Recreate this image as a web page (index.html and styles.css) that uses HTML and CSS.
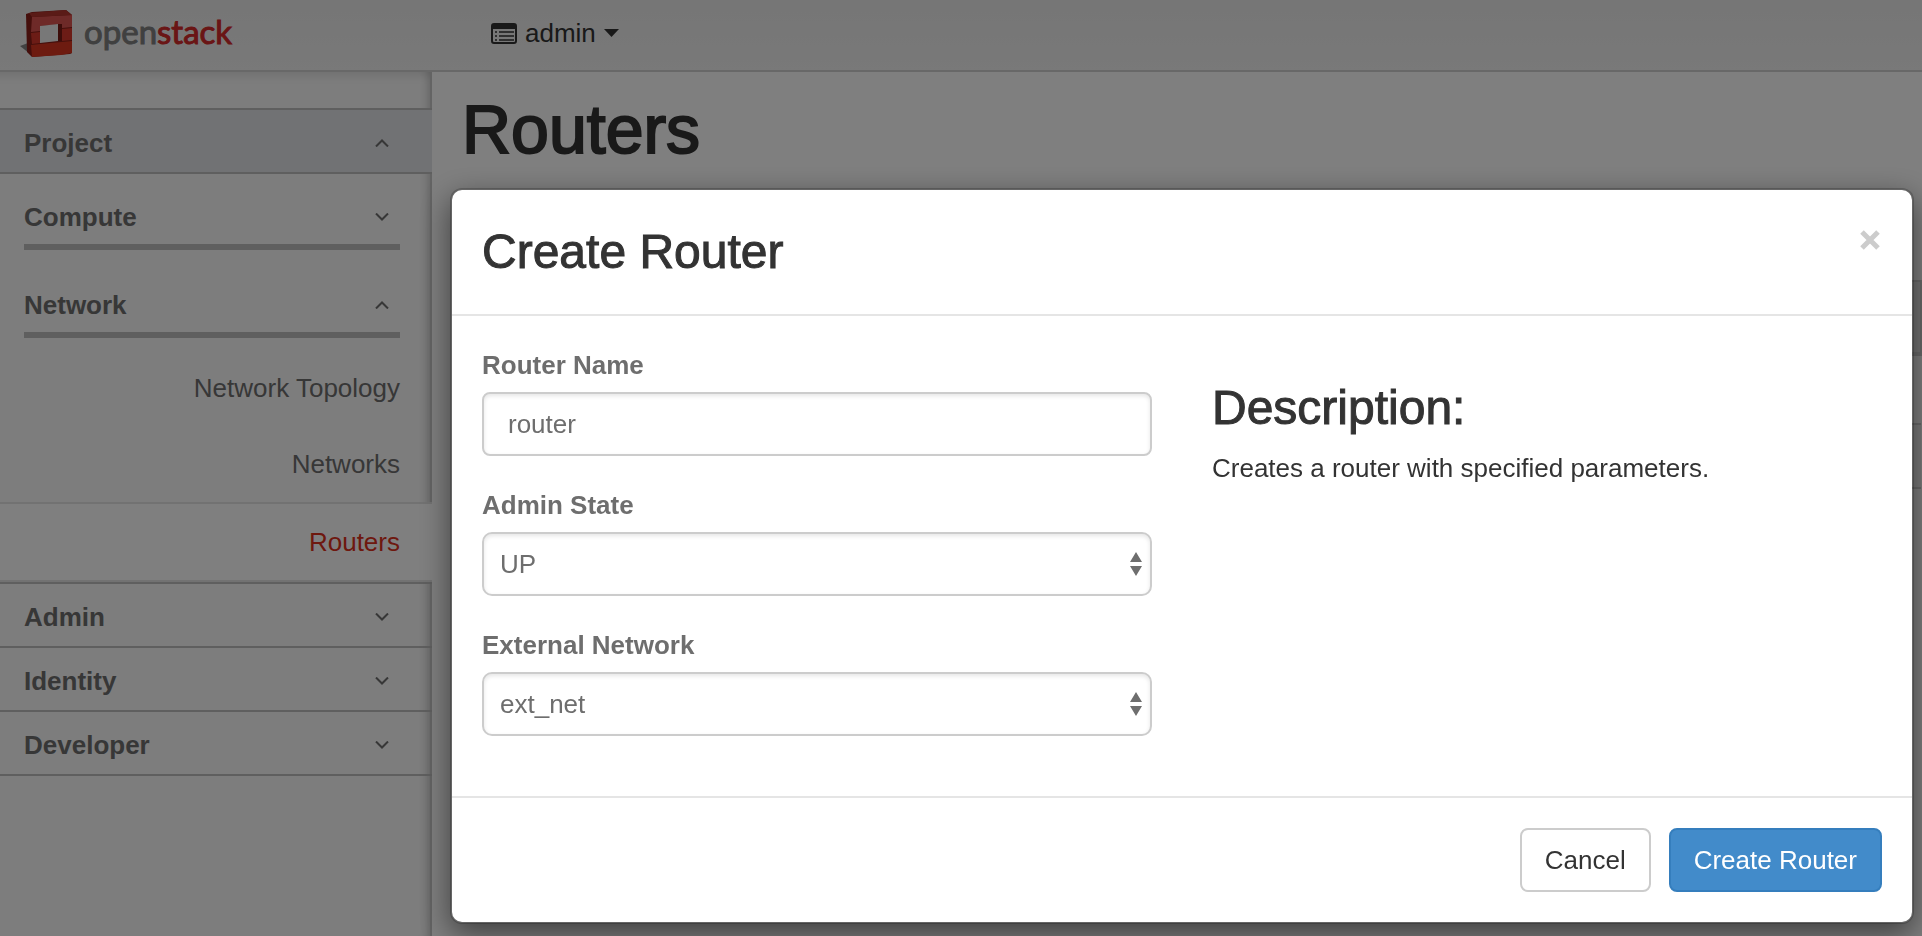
FILE: index.html
```html
<!DOCTYPE html>
<html lang="en">
<head>
    <meta charset="UTF-8">
    <meta name="viewport" content="width=device-width, initial-scale=1.0">
    <title>Routers - OpenStack Dashboard</title>
    <link rel="stylesheet" href="styles.css">
</head>
<body>

    <!-- Top bar -->
    <header class="topbar">
        <a class="brand" href="#">
            <svg class="brand-mark" width="54" height="50" viewBox="0 0 54 50">
                <path d="M0 37 L8 34 L14 48 Z" fill="#858585"/>
                <path d="M6 5 L12 3 L46 1 L52 6 L52 44 L50 45 L12 48 L7 43 Z" fill="#8a1f18"/>
                <path d="M12 8 L52 6 L52 18 L42 19 L42 15 L20 17 L20 22 L11 23 Z" fill="#dc5450"/>
                <path d="M12 8 L9 4 L46 1 L52 6 Z" fill="#b5372f"/>
                <path d="M11 24 L20 23 L20 34 L12 35 Z" fill="#d8392c"/>
                <path d="M42 20 L52 19 L52 31 L42 32 Z" fill="#d8392c"/>
                <path d="M11 36 L20 35 L52 32 L52 44 L41 46 L12 48 Z" fill="#da3620"/>
                <path d="M20 17 L38 15 L38 32 L20 34 Z" fill="#f1f1f1"/>
                <path d="M38 15 L42 15 L42 32 L38 32 Z" fill="#7a1b15"/>
            </svg>
            <span class="brand-text">open<span class="brand-red">stack</span></span>
        </a>
        <button class="project-menu" type="button">
            <svg width="26" height="21" viewBox="0 0 26 21">
                <rect x="1" y="1" width="24" height="19" rx="2" fill="none" stroke="#333" stroke-width="2"/>
                <rect x="1" y="1" width="24" height="5" fill="#333"/>
                <path d="M4 9h2M4 13h2M4 17h2M8 9h15M8 13h15M8 17h15" stroke="#333" stroke-width="1.5"/>
            </svg>
            admin
            <svg class="caret" width="15" height="8" viewBox="0 0 15 8"><path d="M0 0h15L7.500 8z" fill="#333"/></svg>
        </button>
    </header>

    <div class="page">
        <!-- Sidebar -->
        <nav class="sidebar">
            <a class="panel-title open" href="#">Project
                <svg class="chevron" width="14" height="8" viewBox="0 0 14 8"><path d="M1 7.500l6-6 6 6"/></svg>
            </a>
            <div class="panel-body">
                <a class="group-title" href="#">Compute
                    <svg class="chevron" width="14" height="8" viewBox="0 0 14 8"><path d="M1 .5l6 6 6-6"/></svg>
                </a>
                <a class="group-title" href="#">Network
                    <svg class="chevron" width="14" height="8" viewBox="0 0 14 8"><path d="M1 7.500l6-6 6 6"/></svg>
                </a>
                <a class="nav-item" href="#">Network Topology</a>
                <a class="nav-item" href="#">Networks</a>
            </div>
            <a class="nav-item active" href="#">Routers</a>
            <a class="panel-title first" href="#">Admin
                <svg class="chevron" width="14" height="8" viewBox="0 0 14 8"><path d="M1 .5l6 6 6-6"/></svg>
            </a>
            <a class="panel-title" href="#">Identity
                <svg class="chevron" width="14" height="8" viewBox="0 0 14 8"><path d="M1 .5l6 6 6-6"/></svg>
            </a>
            <a class="panel-title" href="#">Developer
                <svg class="chevron" width="14" height="8" viewBox="0 0 14 8"><path d="M1 .5l6 6 6-6"/></svg>
            </a>
        </nav>

        <!-- Content -->
        <main class="content">
            <h1>Routers</h1>
            <table class="router-table">
                <thead><tr><th></th></tr></thead>
                <tbody><tr><td></td></tr></tbody>
                <tfoot><tr><td></td></tr></tfoot>
            </table>
        </main>
    </div>

    <!-- Create router dialog -->
    <div class="backdrop">
        <form class="modal" role="dialog" aria-labelledby="modalTitle">
            <div class="modal-header">
                <h3 id="modalTitle">Create Router</h3>
                <button class="close" type="button" aria-label="Close">
                    <svg width="20" height="20" viewBox="0 0 20 20"><path d="M2 2l16 16M18 2L2 18" stroke="#ccc" stroke-width="5"/></svg>
                </button>
            </div>
            <div class="modal-body">
                <div class="fields">
                    <label for="routerName">Router Name</label>
                    <input class="control" type="text" id="routerName" value="router">

                    <label for="adminState">Admin State</label>
                    <div class="select-wrap">
                        <select class="control" id="adminState">
                            <option>UP</option>
                            <option>DOWN</option>
                        </select>
                        <svg class="arrows" width="12" height="24" viewBox="0 0 12 24"><path d="M0 10L6 0l6 10zM0 14h12L6 24z"/></svg>
                    </div>

                    <label for="externalNetwork">External Network</label>
                    <div class="select-wrap">
                        <select class="control" id="externalNetwork">
                            <option>ext_net</option>
                        </select>
                        <svg class="arrows" width="12" height="24" viewBox="0 0 12 24"><path d="M0 10L6 0l6 10zM0 14h12L6 24z"/></svg>
                    </div>
                </div>
                <div class="description">
                    <h3>Description:</h3>
                    <p>Creates a router with specified parameters.</p>
                </div>
            </div>
            <div class="modal-footer">
                <button class="btn" type="button">Cancel</button>
                <button class="btn btn-primary" type="submit">Create Router</button>
            </div>
        </form>
    </div>

</body>
</html>
```
FILE: styles.css
```css
* {
    box-sizing: border-box;
}

body {
    margin: 0;
    min-height: 100vh;
    display: flex;
    flex-direction: column;
    font-family: "Liberation Sans", Arial, sans-serif;
    font-size: 26px;
    line-height: 36px;
    color: #333;
    background-color: #fff;
}

a {
    color: #6e6e6e;
    text-decoration: none;
}

button, input, select {
    font: inherit;
    color: inherit;
}

h1, h3, p {
    margin: 0;
}

/* the headings are a medium weight */
h1, h3 {
    font-weight: 400;
    -webkit-text-stroke: 1px currentColor;
}

h1 {
    font-size: 68px;
    line-height: 74px;
    -webkit-text-stroke-width: 2px;
}

h3 {
    font-size: 48px;
    line-height: 50px;
}

/* Top bar */
.topbar {
    display: flex;
    align-items: center;
    height: 72px;
    padding-bottom: 14px;
    border-bottom: 2px solid #d0d0d0;
    background: linear-gradient(#ececec, #f2f2f2);
}

.brand {
    display: flex;
    align-items: center;
    gap: 10px;
    width: 491px;
    padding: 12px 0 0 20px;
}

.brand-text {
    padding-bottom: 6px;
    font-family: Lato, "Liberation Sans", sans-serif;
    font-size: 33px;
    color: #808080;
    -webkit-text-stroke: 1px currentColor;
}

.brand-red {
    color: #d42a2a;
}

.project-menu {
    display: flex;
    align-items: center;
    gap: 8px;
    padding: 10px 0 0;
    border: none;
    background: none;
}

/* Sidebar */
.page {
    flex: 1;
    display: flex;
}

.sidebar {
    display: flex;
    flex-direction: column;
    width: 432px;
    padding-top: 36px;
    background-color: #fafafa;
    box-shadow: inset -2px 0 #c8c8c8, inset -12px 0 8px -8px rgba(0, 0, 0, 0.2), inset 0 12px 8px -8px rgba(0, 0, 0, 0.1);
}

.panel-title {
    display: flex;
    align-items: center;
    justify-content: space-between;
    height: 64px;
    padding: 3px 43px 0 24px;
    border-bottom: 2px solid #bebebe;
    font-weight: bold;
}

.panel-title.open {
    height: 66px;
    border-top: 2px solid #bebebe;
    background-color: #e2e4e8;
}

.panel-title.first {
    height: 66px;
    border-top: 2px solid #bebebe;
}

.chevron {
    fill: none;
    stroke: #6e6e6e;
    stroke-width: 2;
}

.panel-body {
    padding: 0 32px 0 24px;
}

.group-title {
    display: flex;
    align-items: center;
    justify-content: space-between;
    padding: 25px 11px 9px 0;
    margin-bottom: 12px;
    border-bottom: 6px solid #bebebe;
    font-weight: bold;
}

.nav-item {
    display: block;
    padding: 20px 0;
    text-align: right;
}

.nav-item.active {
    padding: 20px 32px 20px 0;
    border-top: 2px solid #e4e4e4;
    border-bottom: 2px solid #e4e4e4;
    background-color: #fff;
    color: #dd301c;
}

/* Content */
.content {
    flex: 1;
    padding: 20px 0 0 30px;
}

.router-table {
    width: 100%;
    margin-top: 114px;
    border-collapse: collapse;
}

.router-table th {
    height: 73px;
    border: 2px solid #d4d4d4;
    border-bottom-width: 4px;
    background-color: #e8e8e8;
}

.router-table td {
    height: 70px;
    border-bottom: 2px solid #d4d4d4;
}

.router-table tfoot td {
    height: 64px;
    background-color: #f4f4f4;
}

/* Dialog */
.backdrop {
    position: fixed;
    inset: 0;
    padding: 188px 8px 12px 450px;
    background-color: rgba(0, 0, 0, 0.5);
}

.modal {
    border: 2px solid rgba(0, 0, 0, 0.2);
    border-radius: 12px;
    background-color: #fff;
    background-clip: padding-box;
    box-shadow: 0 10px 30px rgba(0, 0, 0, 0.5);
}

.modal-header {
    display: flex;
    justify-content: space-between;
    align-items: flex-start;
    padding: 37px 30px;
    border-bottom: 2px solid #e5e5e5;
}

.close {
    display: flex;
    padding: 3px 2px;
    border: none;
    background: none;
}

.modal-body {
    display: grid;
    grid-template-columns: 1fr 1fr;
    gap: 60px;
    padding: 30px;
}

.fields label {
    display: block;
    padding-top: 1px;
    margin-bottom: 9px;
    color: #6e6e6e;
    font-weight: bold;
}

.control {
    display: block;
    width: 100%;
    height: 64px;
    margin-bottom: 30px;
    padding: 0 24px;
    border: 2px solid #ccc;
    border-radius: 8px;
    background-color: #fff;
    box-shadow: inset 0 2px 4px rgba(0, 0, 0, 0.1);
    color: #6e6e6e;
}

select.control {
    appearance: none;
    padding: 0 16px;
    border-radius: 10px;
}

.select-wrap {
    position: relative;
}

.arrows {
    position: absolute;
    top: 20px;
    right: 10px;
    fill: #6e6e6e;
    pointer-events: none;
}

.description {
    padding-top: 37px;
}

.description p {
    margin-top: 17px;
}

.modal-footer {
    display: flex;
    justify-content: flex-end;
    gap: 18px;
    padding: 30px;
    border-top: 2px solid #e5e5e5;
}

.btn {
    height: 64px;
    padding: 0 23px;
    border: 2px solid #ccc;
    border-radius: 8px;
    background-color: #fff;
    color: #333;
    cursor: pointer;
}

.btn-primary {
    border-color: #357ebd;
    background-color: #428bca;
    color: #fff;
}
```
